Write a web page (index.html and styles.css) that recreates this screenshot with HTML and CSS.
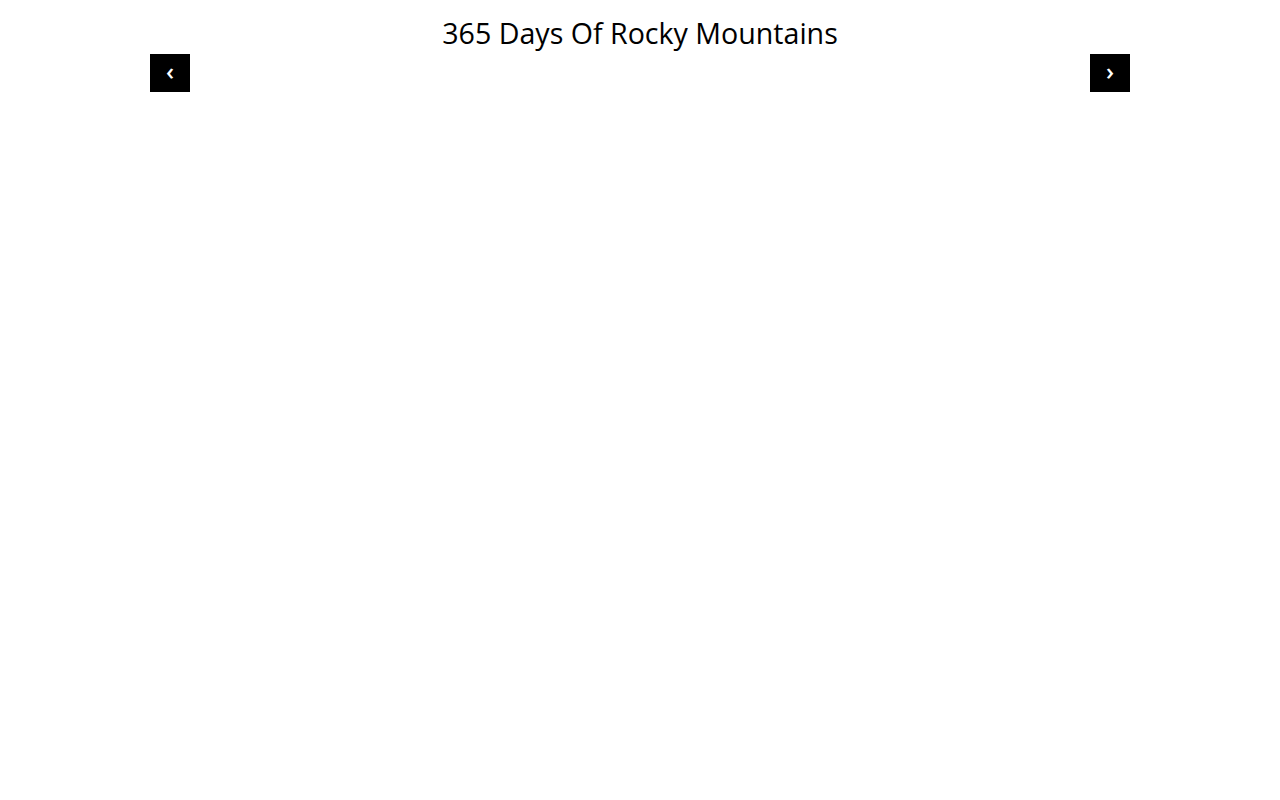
FILE: index.html
```html
<!DOCTYPE html>
<html>
<head>
<meta charset="utf-8">
<link rel="stylesheet" href="styles.css">
</head>
<body>
<div class="page">
  <h1 class="title">365 Days Of Rocky Mountains</h1>
  <div class="slider">
    <button class="nav">&#8249;</button>
    <button class="nav">&#8250;</button>
  </div>
</div>
</body>
</html>
```
FILE: styles.css
```css
html, body { margin: 0; padding: 0; background: #fff; }
body { font-family: "Open Sans", "Noto Sans", sans-serif; color: #000; }
.page { width: 980px; margin: 0 auto; }
.title { margin: 0; padding-top: 13px; font-size: 28.6px; font-weight: 400; text-align: center; line-height: 40px; }
.slider { display: flex; justify-content: space-between; margin-top: 1px; }
.nav { width: 40px; height: 38px; background: #000; color: #fff; border: 0; padding: 0 0 5px; font-family: "Open Sans", sans-serif; font-size: 24px; font-weight: 600; line-height: 33px; cursor: pointer; }
```
